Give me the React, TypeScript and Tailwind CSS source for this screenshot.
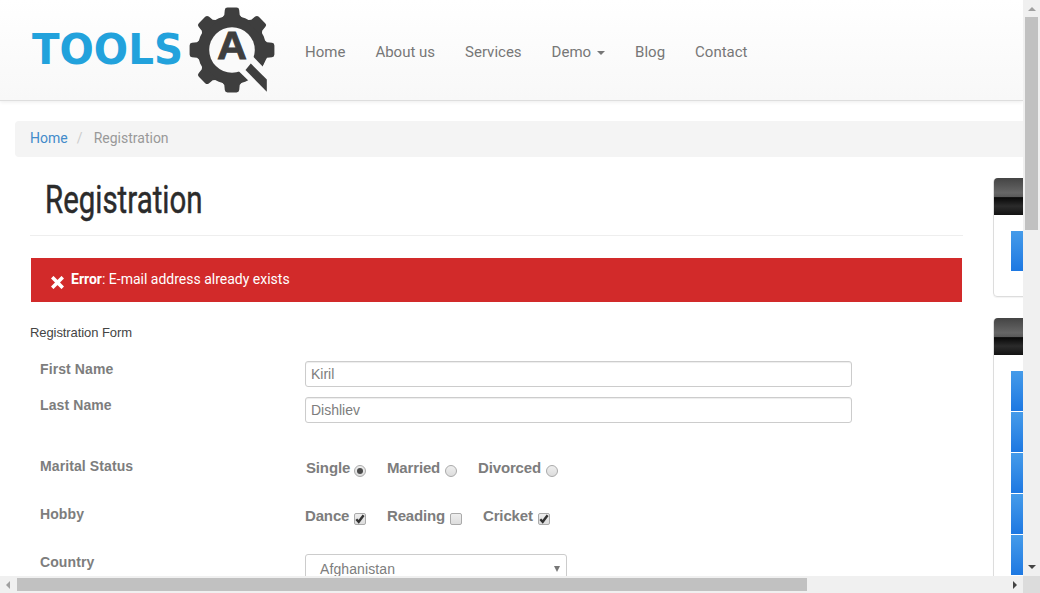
import React from "react";

function Logo() {
  return (
    <svg className="block h-[100px] w-[260px]" viewBox="0 0 260 100" aria-label="TOOLS QA">
      <text x="12" y="64" fontSize="42" fontWeight="700" fontFamily="'DejaVu Sans', sans-serif" fill="#22a2dc" textLength="151" lengthAdjust="spacingAndGlyphs">
        TOOLS
      </text>
      <g fill="#3e3e3e">
        <circle cx="212" cy="50" r="34.5" />
        {[0, 45, 90, 180, 225, 270, 315].map((a) => (
          <path key={a} transform={`rotate(${a} 212 50)`} d="M201 19 L204.3 15 L204.8 10 Q205 7.6 207.5 7.6 H216.5 Q219 7.6 219.2 10 L219.7 15 L223 19 Z" />
        ))}
        <path d="M236 58 L247 57.5 L242 67.5 L236 63 Z" />
      </g>
      <circle cx="212" cy="50" r="22.8" fill="#fafafa" />
      <path d="M218.5 71 L233 56.5 L247 71 L250 98 L234 86 Z" fill="#fafafa" />
      <path d="M230.8 63.5 L246.8 79.5 V91.8 L225.5 70 Z" fill="#3e3e3e" />
      <text x="212" y="59.3" textAnchor="middle" fontSize="39" fontWeight="700" fontFamily="'Liberation Sans', sans-serif" fill="#3e3e3e" stroke="#3e3e3e" strokeWidth="0.8" textLength="30" lengthAdjust="spacingAndGlyphs">
        A
      </text>
    </svg>
  );
}

function Nav() {
  return (
    <nav className="flex items-start gap-[30px] pt-[41px] text-[15px] leading-[22px] whitespace-nowrap text-[#777]">
      <a>Home</a>
      <a>About us</a>
      <a>Services</a>
      <a className="flex items-center gap-[6px]">
        Demo
        <i className="mt-px border-x-4 border-t-4 border-x-transparent border-t-[#777]" />
      </a>
      <a>Blog</a>
      <a>Contact</a>
    </nav>
  );
}

function Radio({ on }: { on?: boolean }) {
  return (
    <span className="mt-[5px] flex size-3 shrink-0 items-center justify-center rounded-full border border-[#aaa] bg-linear-to-b from-[#eee] to-[#ddd]">
      {on && <span className="size-[6px] rounded-full bg-[#4a4a4a]" />}
    </span>
  );
}

function Check({ on }: { on?: boolean }) {
  return (
    <span className="mt-[5px] flex size-3 shrink-0 items-center justify-center rounded-[2px] border border-[#aaa] bg-linear-to-b from-[#eee] to-[#ddd]">
      {on && (
        <svg className="size-[10px]" viewBox="0 0 10 10" fill="none" stroke="#333" strokeWidth="2.4">
          <path d="M1.3 5.2 L3.7 7.8 L8.6 1.2" />
        </svg>
      )}
    </span>
  );
}

function Option({ width, label, children }: { width: string; label: string; children: React.ReactNode }) {
  return (
    <label className={`flex items-center justify-between text-[15px] leading-[20px] font-bold tracking-[-0.15px] ${width}`}>
      {label}
      {children}
    </label>
  );
}

function Row({ label, height, children }: { label: string; height: string; children: React.ReactNode }) {
  return (
    <div className={`flex items-start ${height}`}>
      <span className="w-[265px] shrink-0 text-[14px] leading-[16px] font-bold tracking-[0.1px]">{label}</span>
      {children}
    </div>
  );
}

function Panel({ items, className }: { items: number; className: string }) {
  return (
    <div className={`shrink-0 rounded-[4px] border border-[#ddd] shadow-[0_1px_1px_rgba(0,0,0,0.05)] ${className}`}>
      <div className="-mt-px h-[37px] rounded-t-[4px] bg-[linear-gradient(to_bottom,#444_0%,#666_40%,#595959_51%,#080808_53%,#2b2b2b_76%,#131313_100%)]" />
      <div className="flex flex-col gap-px pt-[16px] pl-[17px]">
        {Array.from({ length: items }, (_, i) => (
          <div key={i} className="h-10 bg-linear-to-b from-[#459be9] to-[#1d78e2]" />
        ))}
      </div>
    </div>
  );
}

export default function App() {
  return (
    <div className="grid h-[593px] w-[1040px] grid-cols-[1023px_17px] grid-rows-[576px_17px] overflow-hidden bg-white font-['Roboto',sans-serif]">
      <div className="overflow-hidden">
        <header className="flex h-[101px] border-b border-[#dedede] bg-linear-to-b from-white to-[#f8f8f8] pl-5 shadow-[0_1px_4px_rgba(0,0,0,0.08)]">
          <div className="w-[285px] shrink-0"><Logo /></div>
          <Nav />
        </header>
        <div className="mt-5 ml-[15px] flex h-9 items-center rounded-l-[4px] bg-[#f4f4f4] pb-[2px] pl-[15px] text-[14px] text-[#999]">
          <span className="text-[#428bca]">Home</span>
          <span className="w-[26px] pl-[9px] text-[#ccc]">/</span>
          <span>Registration</span>
        </div>
        <div className="flex">
          <main className="w-[993px] shrink-0 px-[30px]">
            <div className="h-[79px] border-b border-[#eee] pt-[17px] pl-[15px]">
              <h1 className="w-[220px] origin-left scale-x-[0.745] text-[39.5px] leading-[52px] text-[#2b2b2b] [-webkit-text-stroke:0.5px_#2b2b2b]">Registration</h1>
            </div>
            <div className="mx-px mt-[22px] flex h-11 w-[931px] items-center bg-[#d22a2a] pl-[20px] text-[14px] text-white">
              <svg className="mt-[4px] mr-[7px] size-[13px]" viewBox="0 0 13 13" stroke="#fff" strokeWidth="3.6">
                <path d="M1.2 1.2 L11.8 11.8 M11.8 1.2 L1.2 11.8" />
              </svg>
              <p className="-mt-[2px]"><b>Error</b>: E-mail address already exists</p>
            </div>
            <p className="mt-[22px] font-['Liberation_Sans',sans-serif] text-[13px] leading-[18px] tracking-[-0.08px] text-[#444]">Registration Form</p>
            <form className="mt-[19px] pl-[10px] font-['Liberation_Sans',sans-serif] text-[#7d7d7d]">
              <Row label="First Name" height="h-9">
                <div className="h-[26px] w-[547px] rounded-[3px] border border-[#ccc] pl-[5px] text-[14px] leading-[24px] shadow-[inset_0_1px_1px_rgba(0,0,0,0.075)]">Kiril</div>
              </Row>
              <Row label="Last Name" height="h-[61px]">
                <div className="h-[26px] w-[547px] rounded-[3px] border border-[#ccc] pl-[5px] text-[14px] leading-[24px] shadow-[inset_0_1px_1px_rgba(0,0,0,0.075)]">Dishliev</div>
              </Row>
              <Row label="Marital Status" height="h-12">
                <div className="flex gap-[21px] pl-px">
                  <Option width="w-[60px]" label="Single"><Radio on /></Option>
                  <Option width="w-[70px]" label="Married"><Radio /></Option>
                  <Option width="w-[80px]" label="Divorced"><Radio /></Option>
                </div>
              </Row>
              <Row label="Hobby" height="h-12">
                <div className="flex gap-[21px]">
                  <Option width="w-[61px]" label="Dance"><Check on /></Option>
                  <Option width="w-[75px]" label="Reading"><Check /></Option>
                  <Option width="w-[67px]" label="Cricket"><Check on /></Option>
                </div>
              </Row>
              <Row label="Country" height="h-9">
                <div className="flex h-[32px] w-[262px] items-center justify-between rounded-[3px] border border-[#ccc] pr-[6px] pb-[2px] pl-[14px] text-[14px] tracking-[0.1px]">
                  <span>Afghanistan</span>
                  <i className="border-x-[3px] border-t-[6px] border-x-transparent border-t-[#777]" />
                </div>
              </Row>
            </form>
          </main>
          <aside className="flex w-[260px] shrink-0 flex-col gap-[21px] pt-[21px]">
            <Panel items={1} className="h-[119px]" />
            <Panel items={6} className="h-[320px]" />
          </aside>
        </div>
      </div>
      <div className="flex flex-col items-center justify-between bg-[#f0f0f0]">
        <div className="flex flex-col items-center">
          <i className="mt-[7px] mb-[6px] border-x-4 border-b-4 border-x-transparent border-b-[#a0a0a0]" />
          <div className="h-[213px] w-[13px] bg-[#c1c1c1]" />
        </div>
        <i className="mb-[7px] border-x-4 border-t-4 border-x-transparent border-t-[#444]" />
      </div>
      <div className="flex items-center justify-between bg-[#f0f0f0]">
        <div className="flex items-center">
          <i className="mr-[7px] ml-[6px] border-y-4 border-r-4 border-y-transparent border-r-[#a0a0a0]" />
          <div className="h-[13px] w-[790px] bg-[#c1c1c1]" />
        </div>
        <i className="mr-[6px] border-y-4 border-l-4 border-y-transparent border-l-[#444]" />
      </div>
      <div className="bg-[#dcdcdc]" />
    </div>
  );
}
